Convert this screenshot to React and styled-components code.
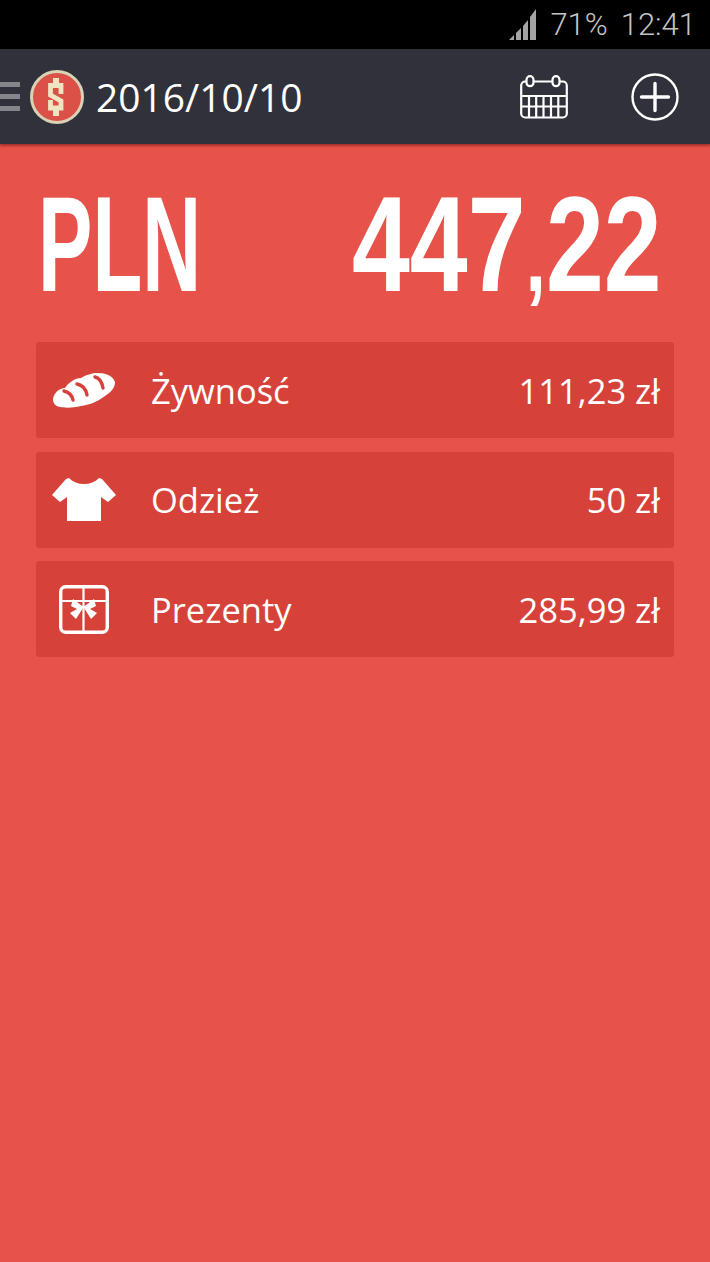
import styled, { createGlobalStyle } from "styled-components";

const GlobalStyle = createGlobalStyle`
  html, body {
    margin: 0;
    padding: 0;
    background: #e7524a;
  }
`;

const Screen = styled.div`
  width: 710px;
  height: 1262px;
  overflow: hidden;
  display: flex;
  flex-direction: column;
  background: #e7524a;
  font-family: "Open Sans", "Noto Sans", sans-serif;
  color: #fff;
`;

const StatusBar = styled.div`
  height: 49px;
  background: #000;
  display: flex;
  align-items: center;
  justify-content: flex-end;
  padding-right: 14px;
  font-family: Roboto, sans-serif;
  font-weight: 300;
  font-size: 31px;
  color: #c4c4c4;
`;

const Battery = styled.span`
  margin: 0 13px 0 14px;
`;

const Toolbar = styled.div`
  height: 95px;
  background: #30313a;
  display: flex;
  align-items: center;
  box-shadow: 0 2px 2px rgba(120, 30, 25, 0.6);
  position: relative;
`;

const Burger = styled.div`
  width: 20px;
  display: flex;
  flex-direction: column;
  gap: 7px;
  margin-right: 10px;

  span {
    height: 5px;
    background: #85868b;
  }
`;

const DateText = styled.div`
  font-size: 38.9px;
  margin-left: 12px;
  flex: 1;
`;

const ToolIcon = styled.svg`
  display: block;
  flex: none;
  margin-right: ${(p) => p.$gap || 0}px;
`;

const Total = styled.div`
  display: flex;
  justify-content: space-between;
  height: 98px;
  margin: 50px 51px 0 38px;
  font-family: "Liberation Sans", sans-serif;
  font-weight: 700;
  font-size: 136px;
  line-height: 100px;
`;

const TotalCell = styled.div`
  width: ${(p) => p.$width}px;
`;

const Squeezed = styled.span`
  display: block;
  white-space: nowrap;
  transform: scaleX(${(p) => p.$x});
  transform-origin: left center;
`;

const Comma = styled.span`
  font-size: 96px;
`;

const List = styled.div`
  display: flex;
  flex-direction: column;
  gap: 13.5px;
  margin: 50px 36px 0;
`;

const Row = styled.div`
  height: 96px;
  background: #d64239;
  border-radius: 3px;
  display: flex;
  align-items: center;
  font-size: 34.5px;
  padding-right: 14px;
`;

const IconCell = styled.div`
  width: 96px;
  margin-right: 19px;
  display: flex;
  justify-content: center;
  flex: none;
`;

const Label = styled.div`
  flex: 1;
`;

const SignalIcon = () => (
  <svg width="27" height="31" viewBox="0 0 27 31" style={{ marginTop: -1 }}>
    <g fill="#a3a3a3">
      <path d="M0 31 L5 26 V31 Z" />
      <path d="M7 24 L12 19 V31 H7 Z" />
      <path d="M14 17 L19 11 V31 H14 Z" />
      <path d="M21 8 L27 0 V31 H21 Z" />
    </g>
  </svg>
);

const Logo = () => (
  <ToolIcon width="54" height="54" viewBox="0 0 54 54">
    <circle cx="27" cy="27" r="25.5" fill="#dc5147" stroke="#d8d3b5" strokeWidth="3" />
    <path
      d="M31 24 V15.5 H20.5 V25 L31 31 V38 H20.5 V30"
      fill="none"
      stroke="#eee4c2"
      strokeWidth="4.8"
    />
    <rect x="23" y="8" width="6" height="6" fill="#eee4c2" />
    <rect x="23" y="40" width="6" height="6" fill="#eee4c2" />
  </ToolIcon>
);

const CalendarIcon = () => (
  <ToolIcon width="48" height="44" viewBox="0 0 48 44" $gap={63}>
    <g fill="none" stroke="#fff" strokeWidth="2.2">
      <rect x="1.2" y="6.5" width="45.6" height="36" rx="4" />
      <rect x="6.5" y="1.2" width="7" height="10" rx="3.5" fill="#30313a" />
      <rect x="32.5" y="1.2" width="7" height="10" rx="3.5" fill="#30313a" />
      <path d="M1 21 H47 M1 31.5 H47" />
      <path d="M9 21 V42 M16.2 21 V42 M23.5 21 V42 M31 21 V42 M38.3 21 V42" />
    </g>
  </ToolIcon>
);

const PlusIcon = () => (
  <ToolIcon width="48" height="48" viewBox="0 0 48 48" $gap={31}>
    <circle cx="24" cy="24" r="22.5" fill="none" stroke="#fff" strokeWidth="2.4" />
    <path d="M10.5 24 H37.5 M24 10.5 V37.5" stroke="#fff" strokeWidth="3.4" strokeLinecap="round" />
  </ToolIcon>
);

const BreadIcon = () => (
  <svg width="62" height="35" viewBox="0 0 62 35">
    <path
      d="M0 26 C1 20 6 15 12 15 C15 10 22 5 28 5 C32 2 40 0 45 0 C53 0 60 3 62 9 C62 15 58 19 52 23 C44 29 36 32 28 33 C20 35 12 35 7 34 C2 33 0 30 0 26 Z"
      fill="#fff"
    />
    <g fill="none" stroke="#d64239" strokeWidth="3.4" strokeLinecap="round">
      <path d="M11 18 C15 19 19 22 20 27" />
      <path d="M24 11 C29 12 33 16 34 22" />
      <path d="M42 4 C46 5 49 9 50 15" />
    </g>
  </svg>
);

const ShirtIcon = () => (
  <svg width="64" height="43" viewBox="0 0 64 43">
    <path
      d="M17 0 C21 4 26 6 32 6 C38 6 43 4 47 0 L50 1 L64 17 L56 24 L49 19 V43 H15 V19 L8 24 L0 17 L14 1 Z"
      fill="#fff"
    />
  </svg>
);

const GiftIcon = () => (
  <svg width="50" height="49" viewBox="0 0 50 49">
    <rect x="1.7" y="1.7" width="46.6" height="45.6" rx="5" fill="none" stroke="#fff" strokeWidth="3.4" />
    <path d="M1 16 H49 M24.5 1 V48" stroke="#fff" strokeWidth="2.2" />
    <path d="M24.5 22 L14 14 L12 21 L18 24 L11 28 L17 34 Z" fill="#fff" />
    <path d="M24.5 22 L35 14 L37 21 L31 24 L38 28 L32 34 Z" fill="#fff" />
  </svg>
);

const items = [
  { label: "Żywność", amount: "111,23 zł", Icon: BreadIcon },
  { label: "Odzież", amount: "50 zł", Icon: ShirtIcon },
  { label: "Prezenty", amount: "285,99 zł", Icon: GiftIcon },
];

export default function App() {
  return (
    <Screen>
      <GlobalStyle />
      <StatusBar>
        <SignalIcon />
        <Battery>71%</Battery>
        12:41
      </StatusBar>
      <Toolbar>
        <Burger>
          <span />
          <span />
          <span />
        </Burger>
        <Logo />
        <DateText>2016/10/10</DateText>
        <CalendarIcon />
        <PlusIcon />
      </Toolbar>
      <Total>
        <TotalCell $width={157}>
          <Squeezed $x={0.6}>PLN</Squeezed>
        </TotalCell>
        <TotalCell $width={307}>
          <Squeezed $x={0.765}>
            447<Comma>,</Comma>22
          </Squeezed>
        </TotalCell>
      </Total>
      <List>
        {items.map(({ label, amount, Icon }) => (
          <Row key={label}>
            <IconCell>
              <Icon />
            </IconCell>
            <Label>{label}</Label>
            <div>{amount}</div>
          </Row>
        ))}
      </List>
    </Screen>
  );
}
